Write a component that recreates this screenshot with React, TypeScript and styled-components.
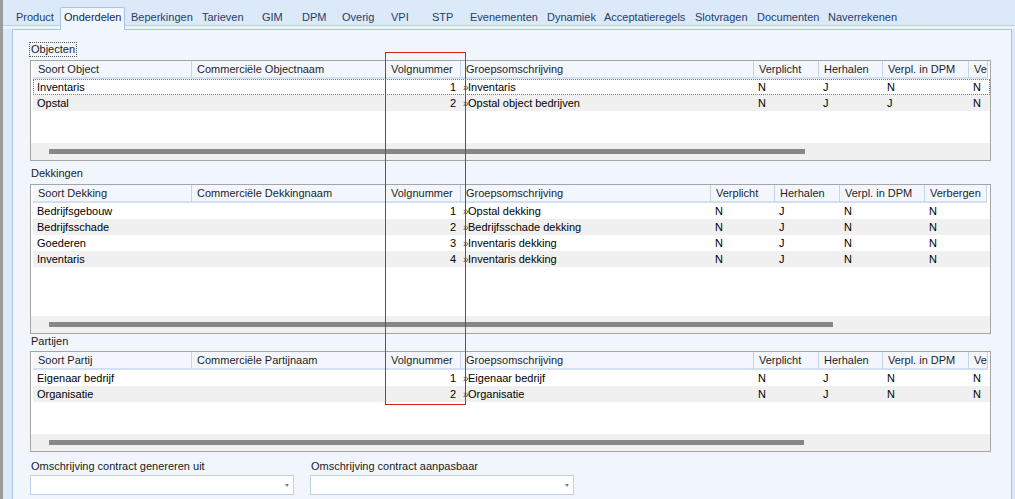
import React from "react";
import styled, { createGlobalStyle, css } from "styled-components";

const GlobalStyle = createGlobalStyle`
  html, body {
    margin: 0;
    padding: 0;
    background: #dce9f8;
  }
  body {
    font-family: "Liberation Sans", Arial, sans-serif;
    font-size: 11px;
    color: #000;
  }
`;

const Screen = styled.div`
  position: relative;
  width: 1015px;
  height: 499px;
  overflow: hidden;
`;

const Window = styled.div`
  display: flex;
  flex-direction: column;
  box-sizing: border-box;
  height: 100%;
  background: #dce8f7;
  border-left: 3px solid #9b9b9b;
`;

const TabStrip = styled.div`
  display: flex;
  align-items: flex-end;
  flex-shrink: 0;
  height: 29px;
  padding-left: 8px;
  background: linear-gradient(#dce9f8 0 25px, #b9d0ec 25px 26px, #edf3fb 26px);
`;

const Tab = styled.div<{ $w: number; $active?: boolean }>`
  box-sizing: border-box;
  flex-shrink: 0;
  width: ${(p) => p.$w}px;
  white-space: nowrap;
  line-height: 14px;
  color: #23406b;
  ${(p) =>
    p.$active
      ? css`
          position: relative;
          z-index: 1;
          height: 23px;
          margin: 0 1px -1px;
          padding: 2px 0 0 3px;
          background: #f1f6fd;
          border: 1px solid #a8c4e7;
          border-bottom: none;
          border-radius: 2px 2px 0 0;
          color: #14284a;
        `
      : css`
          height: 29px;
          padding: 10px 0 0 5px;
        `}
`;

const Panel = styled.div`
  flex: 1;
  min-height: 0;
  display: flex;
  flex-direction: column;
  margin: 0 3px 0 9px;
  padding: 12px 20px 0 17px;
  background: #f1f6fd;
  border: 1px solid #a8c4e7;
  border-bottom: none;
`;

const Caption = styled.div<{ $focused?: boolean; $mt: number; $mb: number }>`
  align-self: flex-start;
  line-height: 14px;
  margin: ${(p) => p.$mt}px 0 ${(p) => p.$mb}px 1px;
  color: #1a1a1a;
  ${(p) =>
    p.$focused &&
    css`
      line-height: 13px;
      margin-left: -1px;
      padding: 0 1px;
      border: 1px dotted #555;
    `}
`;

const Grid = styled.div<{ $h: number }>`
  display: flex;
  flex-direction: column;
  flex-shrink: 0;
  box-sizing: border-box;
  height: ${(p) => p.$h}px;
  border: 1px solid #a5a5a5;
  background: #fff;
  overflow: hidden;
`;

const HeaderRow = styled.div<{ $cols: string }>`
  display: grid;
  grid-template-columns: ${(p) => p.$cols};
  height: 18px;
  padding-left: 2px;
`;

const HeaderCell = styled.div`
  box-sizing: border-box;
  height: 18px;
  padding-left: 5px;
  line-height: 16px;
  white-space: nowrap;
  overflow: hidden;
  color: #1e1e1e;
  background: #f3f7fd;
  border-right: 1px solid #c3d5ec;
  border-bottom: 2px solid #d2e0f2;
`;

const Body = styled.div`
  flex: 1;
  padding-left: 2px;
  background: #fff;
`;

const Row = styled.div<{ $cols: string; $alt?: boolean; $focused?: boolean }>`
  display: grid;
  grid-template-columns: ${(p) => p.$cols};
  height: 16px;
  line-height: 16px;
  background: ${(p) => (p.$alt ? "#f0f0f0" : "#fff")};
  ${(p) =>
    p.$focused &&
    css`
      outline: 1px dotted #777;
      outline-offset: -1px;
    `}
`;

const Cell = styled.div<{ $align?: "right"; $pad?: number }>`
  padding: 0 ${(p) => (p.$align === "right" ? 5 : 0)}px 0 ${(p) => p.$pad ?? 4}px;
  text-align: ${(p) => p.$align ?? "left"};
  white-space: nowrap;
  overflow: hidden;
`;

const Chevron = styled.span`
  display: inline-block;
  width: 5px;
  color: #4a4a4a;
  font-size: 10px;
  letter-spacing: -1px;
`;

const ScrollArea = styled.div`
  display: flex;
  align-items: center;
  flex-shrink: 0;
  height: 17px;
  background: #f0f0f0;
`;

const Thumb = styled.div<{ $w: number }>`
  width: ${(p) => p.$w}px;
  height: 5px;
  margin-left: 18px;
  background: #878787;
`;

const Fields = styled.div`
  display: flex;
  gap: 16px;
  margin-top: 7px;
`;

const Field = styled.div`
  display: flex;
  flex-direction: column;
  width: 264px;
`;

const FieldLabel = styled.div`
  margin-left: 1px;
  line-height: 14px;
  color: #1a1a1a;
`;

const Combo = styled.div`
  display: flex;
  align-items: center;
  justify-content: flex-end;
  box-sizing: border-box;
  height: 20px;
  margin-top: 2px;
  padding-right: 4px;
  background: #fff;
  border: 1px solid #bcd0ea;
`;

const ComboArrow = styled.span`
  width: 0;
  height: 0;
  border-left: 2.5px solid transparent;
  border-right: 2.5px solid transparent;
  border-top: 3px solid #7284a0;
`;

const Highlight = styled.div`
  position: absolute;
  left: 385px;
  top: 52px;
  width: 81px;
  height: 353px;
  box-sizing: border-box;
  border: 1px solid #d42020;
  pointer-events: none;
`;

const tabs: [string, number][] = [
  ["Product", 48],
  ["Onderdelen", 65],
  ["Beperkingen", 71],
  ["Tarieven", 60],
  ["GIM", 40],
  ["DPM", 40],
  ["Overig", 49],
  ["VPI", 41],
  ["STP", 38],
  ["Evenementen", 77],
  ["Dynamiek", 57],
  ["Acceptatieregels", 91],
  ["Slotvragen", 62],
  ["Documenten", 71],
  ["Naverrekenen", 80],
];

const wideCols = [159, 194, 75, 293, 65, 64, 86, 19];
const narrowCols = [159, 194, 75, 250, 64, 65, 85, 62];
const toTemplate = (cols: number[]) => cols.map((c) => `${c}px`).join(" ");

type Line = [string, string, string, string, string, string, string, string];

interface TableProps {
  headers: string[];
  rows: Line[];
  cols: number[];
  height: number;
  thumb: number;
  focusFirst?: boolean;
}

const Table: React.FC<TableProps> = ({ headers, rows, cols, height, thumb, focusFirst }) => {
  const template = toTemplate(cols);
  return (
    <Grid $h={height}>
      <HeaderRow $cols={template}>
        {headers.map((h) => (
          <HeaderCell key={h}>{h}</HeaderCell>
        ))}
      </HeaderRow>
      <Body>
        {rows.map((r, i) => (
          <Row key={i} $cols={template} $alt={i % 2 === 1} $focused={focusFirst && i === 0}>
            <Cell>{r[0]}</Cell>
            <Cell>{r[1]}</Cell>
            <Cell $align="right">{r[2]}</Cell>
            <Cell $pad={2}>
              <Chevron>»</Chevron>
              {r[3]}
            </Cell>
            <Cell>{r[4]}</Cell>
            <Cell>{r[5]}</Cell>
            <Cell>{r[6]}</Cell>
            <Cell>{r[7]}</Cell>
          </Row>
        ))}
      </Body>
      <ScrollArea>
        <Thumb $w={thumb} />
      </ScrollArea>
    </Grid>
  );
};

const tail = ["Groepsomschrijving", "Verplicht", "Herhalen", "Verpl. in DPM", "Verbergen"];

export default function App() {
  return (
    <Screen>
      <GlobalStyle />
      <Window>
        <TabStrip>
          {tabs.map(([name, w]) => (
            <Tab key={name} $w={w} $active={name === "Onderdelen"}>
              {name}
            </Tab>
          ))}
        </TabStrip>
        <Panel>
          <Caption $focused $mt={0} $mb={3}>
            Objecten
          </Caption>
          <Table
            headers={["Soort Object", "Commerciële Objectnaam", "Volgnummer", ...tail]}
            cols={wideCols}
            height={101}
            thumb={756}
            focusFirst
            rows={[
              ["Inventaris", "", "1", "Inventaris", "N", "J", "N", "N"],
              ["Opstal", "", "2", "Opstal object bedrijven", "N", "J", "J", "N"],
            ]}
          />
          <Caption $mt={5} $mb={4}>
            Dekkingen
          </Caption>
          <Table
            headers={["Soort Dekking", "Commerciële Dekkingnaam", "Volgnummer", ...tail]}
            cols={narrowCols}
            height={150}
            thumb={784}
            rows={[
              ["Bedrijfsgebouw", "", "1", "Opstal dekking", "N", "J", "N", "N"],
              ["Bedrijfsschade", "", "2", "Bedrijfsschade dekking", "N", "J", "N", "N"],
              ["Goederen", "", "3", "Inventaris dekking", "N", "J", "N", "N"],
              ["Inventaris", "", "4", "Inventaris dekking", "N", "J", "N", "N"],
            ]}
          />
          <Caption $mt={0} $mb={3}>
            Partijen
          </Caption>
          <Table
            headers={["Soort Partij", "Commerciële Partijnaam", "Volgnummer", ...tail]}
            cols={wideCols}
            height={101}
            thumb={755}
            rows={[
              ["Eigenaar bedrijf", "", "1", "Eigenaar bedrijf", "N", "J", "N", "N"],
              ["Organisatie", "", "2", "Organisatie", "N", "J", "N", "N"],
            ]}
          />
          <Fields>
            <Field>
              <FieldLabel>Omschrijving contract genereren uit</FieldLabel>
              <Combo>
                <ComboArrow />
              </Combo>
            </Field>
            <Field>
              <FieldLabel>Omschrijving contract aanpasbaar</FieldLabel>
              <Combo>
                <ComboArrow />
              </Combo>
            </Field>
          </Fields>
        </Panel>
      </Window>
      <Highlight />
    </Screen>
  );
}
